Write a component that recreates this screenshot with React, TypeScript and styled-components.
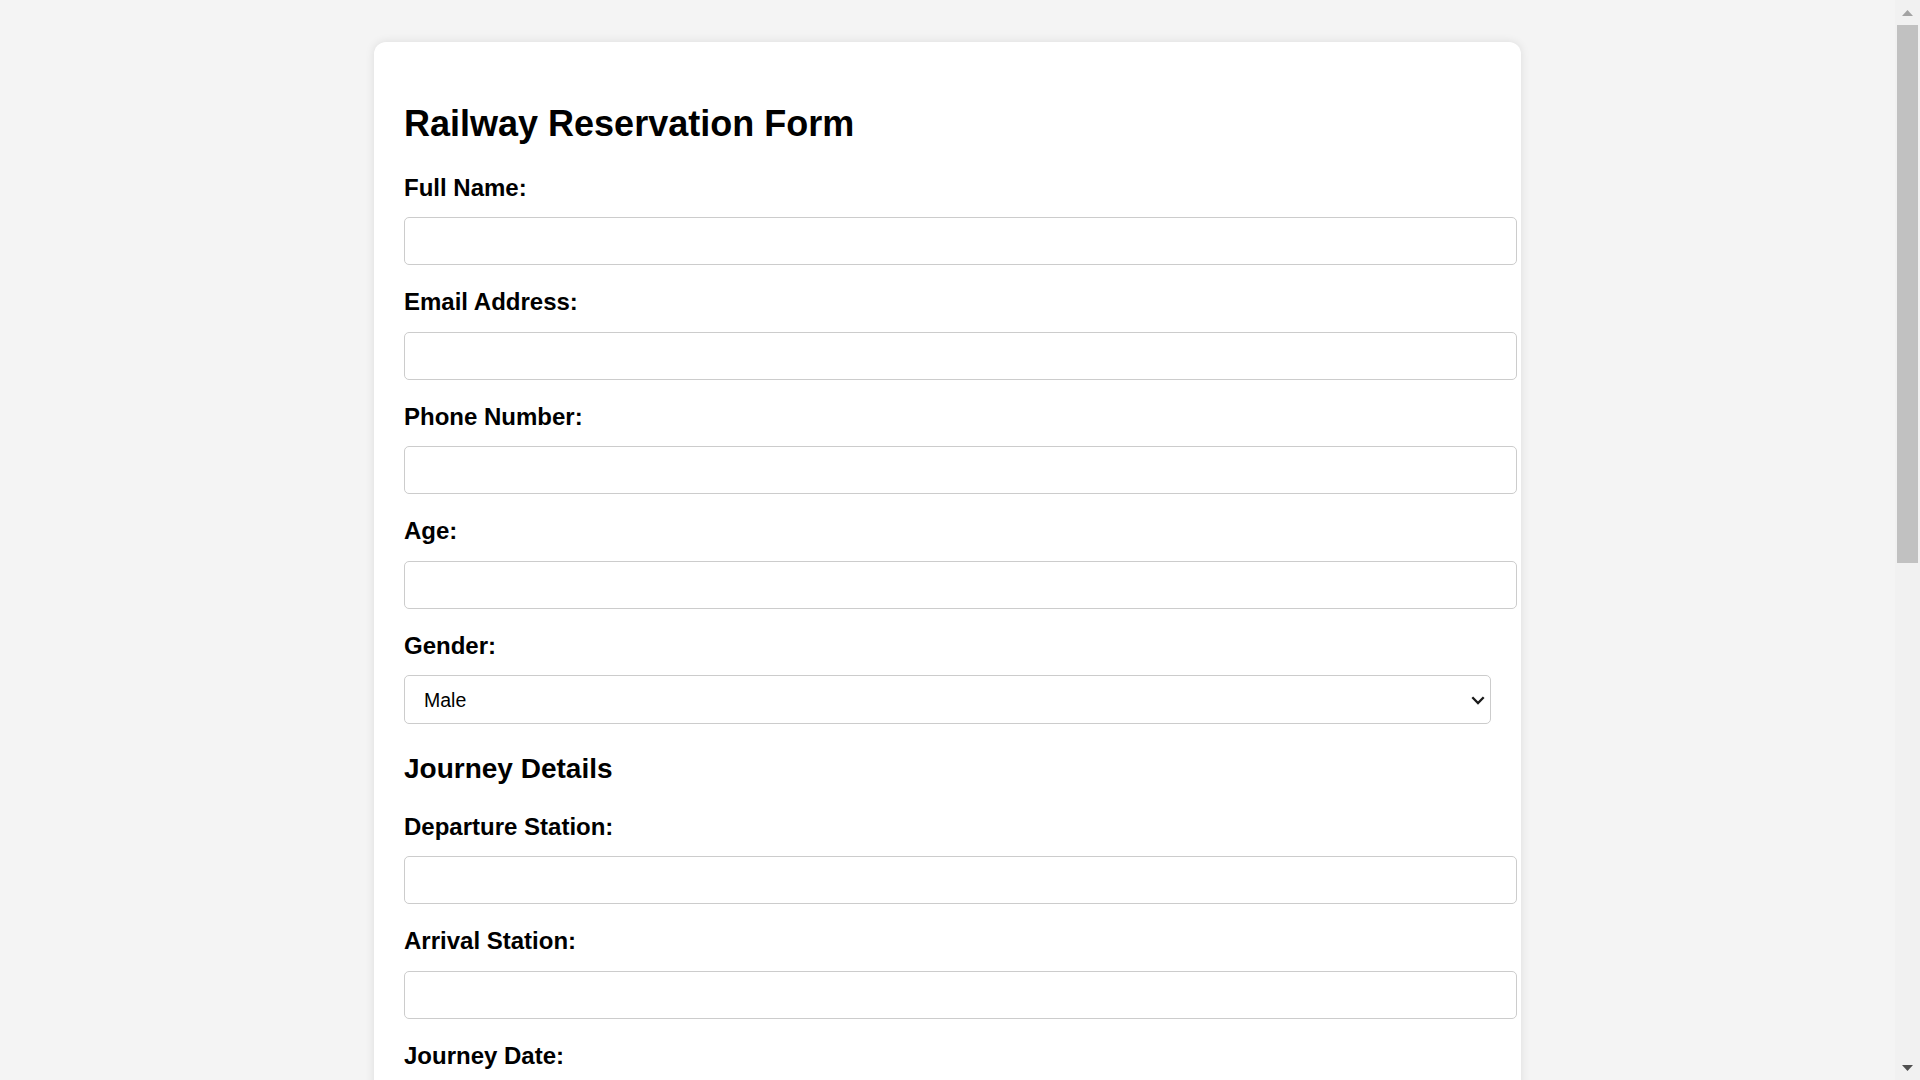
import React from 'react';
import styled, { createGlobalStyle } from 'styled-components';

const GlobalStyle = createGlobalStyle`
  html {
    background: #f4f4f4;
  }
  body {
    margin: 0;
    background: #f4f4f4;
    font-family: "Liberation Sans", Arial, sans-serif;
    color: #000;
  }
`;

const Page = styled.div`
  padding: 42px 25px 42px 0;
`;

const Card = styled.form`
  box-sizing: border-box;
  width: 1147px;
  margin: 0 auto;
  padding: 30px;
  background: #fff;
  border-radius: 12px;
  box-shadow: 0 0 10px rgba(0, 0, 0, 0.1);
`;

const Title = styled.h1`
  margin: 30.5px 0 30px;
  font-size: 36px;
  line-height: 42px;
  font-weight: bold;
`;

const Section = styled.h2`
  margin: 29px 0 28.5px;
  font-size: 28px;
  line-height: 32px;
  font-weight: bold;
`;

const Field = styled.div`
  margin-bottom: 24px;
`;

const Label = styled.label`
  display: block;
  margin-bottom: 16.5px;
  font-size: 24px;
  line-height: 26px;
  font-weight: bold;
`;

const Input = styled.input`
  display: block;
  box-sizing: content-box;
  width: 100%;
  height: 24px;
  padding: 11px 12px;
  border: 1px solid #ccc;
  border-radius: 5px;
  background: #fff;
  font-family: "Liberation Sans", Arial, sans-serif;
  font-size: 19.5px;
  color: #000;
  outline: none;
`;

const SelectWrap = styled.div`
  position: relative;
`;

const Select = styled.select`
  display: block;
  box-sizing: border-box;
  width: 100%;
  height: 49px;
  padding: 0 40px 0 19px;
  border: 1px solid #ccc;
  border-radius: 5px;
  background: #fff;
  font-family: "Liberation Sans", Arial, sans-serif;
  font-size: 19.5px;
  color: #000;
  appearance: none;
  -webkit-appearance: none;
  outline: none;
`;

const Chevron = styled.svg`
  position: absolute;
  right: 6px;
  top: 50%;
  width: 14px;
  height: 9px;
  margin-top: -4px;
  pointer-events: none;
`;

const SubmitButton = styled.button`
  display: block;
  width: 100%;
  height: 52px;
  margin-top: 10px;
  border: none;
  border-radius: 5px;
  background: #28a745;
  color: #fff;
  font-family: "Liberation Sans", Arial, sans-serif;
  font-size: 22px;
  font-weight: bold;
  cursor: pointer;
`;

/* replica of the browser's classic vertical scrollbar seen in the screenshot */
const ScrollRail = styled.div`
  position: fixed;
  top: 0;
  right: 0;
  width: 25px;
  height: 100vh;
  display: flex;
  flex-direction: column;
  background: #f1f1f1;
`;

const ScrollButton = styled.div`
  flex: 0 0 25px;
  display: flex;
  align-items: center;
  justify-content: center;
`;

const ScrollTrack = styled.div`
  flex: 1;
  display: flex;
  flex-direction: column;
`;

const ScrollThumb = styled.div`
  height: 538px;
  margin: 0 2px;
  background: #c1c1c1;
`;

const Arrow = styled.svg`
  width: 11px;
  height: 6px;
`;

type TextFieldProps = { id: string; label: string; type?: string };

const TextField = ({ id, label, type = 'text' }: TextFieldProps) => (
  <Field>
    <Label htmlFor={id}>{label}</Label>
    <Input id={id} name={id} type={type} />
  </Field>
);

type SelectFieldProps = { id: string; label: string; options: string[] };

const SelectField = ({ id, label, options }: SelectFieldProps) => (
  <Field>
    <Label htmlFor={id}>{label}</Label>
    <SelectWrap>
      <Select id={id} name={id} defaultValue={options[0]}>
        {options.map((o) => (
          <option key={o} value={o}>
            {o}
          </option>
        ))}
      </Select>
      <Chevron viewBox="0 0 14 9" aria-hidden="true">
        <path d="M1.3 1.3 L7 7 L12.7 1.3" fill="none" stroke="#1a1a1a" strokeWidth="2.3" />
      </Chevron>
    </SelectWrap>
  </Field>
);

export default function App() {
  return (
    <>
      <GlobalStyle />
      <Page>
        <Card onSubmit={(e) => e.preventDefault()}>
          <Title>Railway Reservation Form</Title>
          <TextField id="fullName" label="Full Name:" />
          <TextField id="email" label="Email Address:" type="email" />
          <TextField id="phone" label="Phone Number:" type="tel" />
          <TextField id="age" label="Age:" type="number" />
          <SelectField id="gender" label="Gender:" options={['Male', 'Female', 'Other']} />

          <Section>Journey Details</Section>
          <TextField id="departure" label="Departure Station:" />
          <TextField id="arrival" label="Arrival Station:" />
          <TextField id="journeyDate" label="Journey Date:" />
          <SelectField
            id="travelClass"
            label="Class:"
            options={['Sleeper', 'AC 3 Tier', 'AC 2 Tier', 'AC First Class']}
          />
          <TextField id="passengers" label="Number of Passengers:" type="number" />

          <Section>Payment Details</Section>
          <SelectField
            id="payment"
            label="Payment Method:"
            options={['Credit Card', 'Debit Card', 'UPI', 'Net Banking']}
          />
          <TextField id="cardNumber" label="Card Number:" />
          <TextField id="expiry" label="Expiry Date:" />
          <TextField id="cvv" label="CVV:" />
          <SubmitButton type="submit">Book Ticket</SubmitButton>
        </Card>
      </Page>
      <ScrollRail aria-hidden="true">
        <ScrollButton>
          <Arrow viewBox="0 0 11 6">
            <path d="M0 6 L5.5 0 L11 6 Z" fill="#a3a3a3" />
          </Arrow>
        </ScrollButton>
        <ScrollTrack>
          <ScrollThumb />
        </ScrollTrack>
        <ScrollButton>
          <Arrow viewBox="0 0 11 6">
            <path d="M0 0 L5.5 6 L11 0 Z" fill="#505050" />
          </Arrow>
        </ScrollButton>
      </ScrollRail>
    </>
  );
}
